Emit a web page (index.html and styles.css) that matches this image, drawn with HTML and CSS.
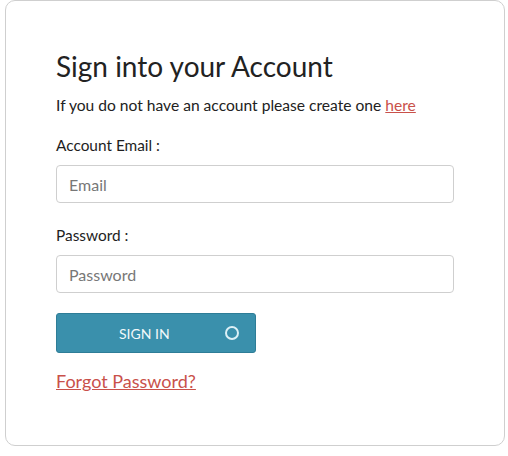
FILE: index.html
```html
<!DOCTYPE html>
<html>
<head>
<meta charset="utf-8">
<link rel="stylesheet" href="styles.css">
</head>
<body>
<div class="card">
  <h1 class="title">Sign into your Account</h1>
  <p class="subtitle">If you do not have an account please create one <a href="#" class="link">here</a></p>
  <form class="form">
    <label class="label">Account Email :</label>
    <input class="input" type="text" placeholder="Email">
    <label class="label label-pw">Password :</label>
    <input class="input" type="password" placeholder="Password">
    <button class="btn" type="button">
      <span class="btn-text">SIGN IN</span>
      <span class="spinner"></span>
    </button>
    <a href="#" class="forgot">Forgot Password?</a>
  </form>
</div>
</body>
</html>
```

FILE: styles.css
```css
html, body {
  margin: 0;
  padding: 0;
  background: #fff;
}
body {
  font-family: Lato, "Open Sans", sans-serif;
  color: #333;
}
.card {
  box-sizing: border-box;
  margin-left: 5px;
  width: 500px;
  height: 446px;
  border: 1px solid #cfcfcf;
  border-radius: 10px;
  padding: 48px 50px 0 50px;
}
.title {
  margin: 0;
  font-size: 28px;
  line-height: 34px;
  font-weight: 400;
  color: #222;
}
.subtitle {
  margin: 12px 0 0 0;
  font-size: 15.6px;
  line-height: 20px;
  color: #222;
}
.link {
  color: #c9514a;
  text-decoration: underline;
}
.form {
  display: flex;
  flex-direction: column;
  align-items: flex-start;
}
.label {
  margin-top: 20px;
  font-size: 15.4px;
  line-height: 20px;
  color: #1e1e1e;
}
.label-pw {
  margin-top: 22px;
}
.input {
  box-sizing: border-box;
  margin-top: 10px;
  width: 398px;
  height: 38px;
  border: 1px solid #cfcfcf;
  border-radius: 4px;
  padding: 0 12px;
  font-family: Lato, sans-serif;
  font-size: 16px;
  color: #333;
  outline: none;
}
.input::placeholder {
  color: #777;
}
.btn {
  box-sizing: border-box;
  margin-top: 20px;
  width: 200px;
  height: 40px;
  background: #3a90ac;
  border: 1px solid #2e7d97;
  border-radius: 3px;
  display: flex;
  align-items: center;
  padding: 0;
  cursor: pointer;
}
.btn-text {
  margin-left: 62px;
  font-family: Lato, sans-serif;
  font-size: 14px;
  color: #f2f8fa;
}
.spinner {
  box-sizing: border-box;
  margin-left: auto;
  margin-right: 16px;
  width: 14px;
  height: 14px;
  border: 2.5px solid #dcf0f6;
  border-radius: 50%;
}
.forgot {
  margin-top: 17px;
  font-size: 18px;
  line-height: 22px;
  color: #c9514a;
  text-decoration: underline;
}
```
